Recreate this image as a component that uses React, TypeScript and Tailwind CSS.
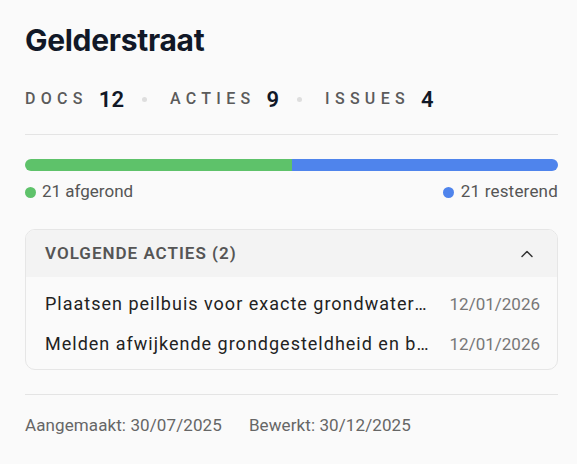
import { ChevronUp } from "lucide-react";

const stats = [
  { label: "DOCS", value: 12 },
  { label: "ACTIES", value: 9 },
  { label: "ISSUES", value: 4 },
];

const actions = [
  { title: "Plaatsen peilbuis voor exacte grondwaterstand bepalen", date: "12/01/2026" },
  { title: "Melden afwijkende grondgesteldheid en bodemverontreiniging", date: "12/01/2026" },
];

export default function App() {
  return (
    <div className="min-h-screen w-[577px] bg-[#fafafa] px-[25px] pt-[22px] font-['Roboto',sans-serif]">
      <h1 className="text-[30px] font-bold leading-[36px] text-[#111827] font-['Inter',sans-serif] tracking-[-0.3px]">
        Gelderstraat
      </h1>

      {/* Stats */}
      <div className="mt-[26px] flex h-[30px] items-center">
        {stats.map((s, i) => (
          <div key={s.label} className="flex items-center">
            {i > 0 && <span className="ml-[18px] mr-[23px] h-[5px] w-[5px] rounded-full bg-[#dedede]" />}
            <span className="text-[16px] font-medium tracking-[5.3px] text-[#5b5b5b]">{s.label}</span>
            <span className="ml-[11px] text-[22px] font-semibold text-[#111827]">{s.value}</span>
          </div>
        ))}
      </div>

      <div className="mt-[20px] h-px w-[533px] bg-[#e4e4e4]" />

      {/* Progress */}
      <div className="mt-[24px] flex h-[12px] w-[533px] overflow-hidden rounded-full">
        <div className="w-1/2 bg-[#5ec26a]" />
        <div className="w-1/2 bg-[#4f84ec]" />
      </div>
      <div className="mt-[9px] flex h-[24px] w-[533px] items-center justify-between text-[17px] text-[#555]">
        <div className="flex items-center gap-[6px]">
          <span className="h-[11px] w-[11px] rounded-full bg-[#5ec26a]" />
          21 afgerond
        </div>
        <div className="flex items-center gap-[7px]">
          <span className="h-[11px] w-[11px] rounded-full bg-[#4f84ec]" />
          <span className="tracking-[0.2px]">21 resterend</span>
        </div>
      </div>

      {/* Next actions */}
      <div className="mt-[25px] w-[533px] overflow-hidden rounded-[10px] border border-[#e6e6e6] bg-[#fafafa]">
        <div className="flex h-[47px] items-center justify-between bg-[#f3f3f3] pl-[19px] pr-[20px]">
          <span className="text-[17px] font-semibold tracking-[1px] text-[#555]">VOLGENDE ACTIES (2)</span>
          <ChevronUp size={20} strokeWidth={1.75} className="text-[#333]" />
        </div>
        <div className="flex flex-col gap-[16px] pl-[19px] pr-[17px] pb-[13px] pt-[15px]">
          {actions.map((a) => (
            <div key={a.title} className="flex h-[24px] items-center justify-between gap-[16px] leading-[24px]">
              <span className="truncate text-[18px] tracking-[1px] text-[#222]">{a.title}</span>
              <span className="shrink-0 text-[17px] text-[#777]">{a.date}</span>
            </div>
          ))}
        </div>
      </div>

      <div className="mt-[24px] h-px w-[533px] bg-[#e4e4e4]" />

      <div className="mt-[19px] flex h-[24px] items-center gap-[27px] text-[17px] tracking-[0.1px] text-[#666]">
        <span>Aangemaakt: 30/07/2025</span>
        <span>Bewerkt: 30/12/2025</span>
      </div>
    </div>
  );
}
